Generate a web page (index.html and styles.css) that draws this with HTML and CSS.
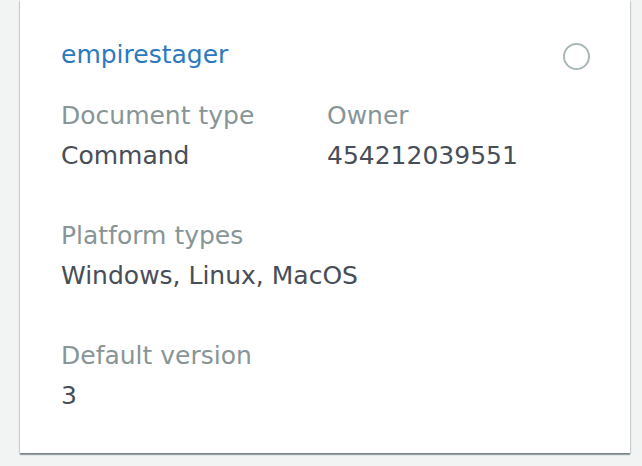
FILE: index.html
```html
<!DOCTYPE html>
<html>
<head>
<meta charset="utf-8">
<link rel="stylesheet" href="styles.css">
</head>
<body>
<div class="page">
  <div class="card">
    <div class="card-head">
      <a class="title" href="#">empirestager</a>
      <span class="radio"></span>
    </div>
    <div class="row">
      <div class="field">
        <div class="label">Document type</div>
        <div class="value">Command</div>
      </div>
      <div class="field">
        <div class="label">Owner</div>
        <div class="value">454212039551</div>
      </div>
    </div>
    <div class="field">
      <div class="label">Platform types</div>
      <div class="value">Windows, Linux, MacOS</div>
    </div>
    <div class="field">
      <div class="label">Default version</div>
      <div class="value">3</div>
    </div>
  </div>
</div>
</body>
</html>
```
FILE: styles.css
```css
html, body {
  margin: 0;
  padding: 0;
  background: #f2f3f3;
}
.page {
  padding: 0 12px 11px 20px;
}
.card {
  background: #ffffff;
  width: 610px;
  box-sizing: border-box;
  padding: 35px 40px 37px 41px;
  font-family: "DejaVu Sans", "Open Sans", sans-serif;
  font-size: 25px;
  line-height: 40px;
  box-shadow: 0 2px 1px 0 rgba(0, 28, 36, 0.35), 1px 1px 1px 0 rgba(0, 28, 36, 0.12), -1px 1px 1px 0 rgba(0, 28, 36, 0.12);
  display: flex;
  flex-direction: column;
  gap: 40px;
}
.card-head {
  display: flex;
  align-items: center;
  justify-content: space-between;
  margin-bottom: -19px;
}
.title {
  color: #2b7abf;
  text-decoration: none;
}
.radio {
  width: 23px;
  height: 23px;
  border: 2px solid #aab7b8;
  border-radius: 50%;
  margin-top: 2px;
}
.row {
  display: grid;
  grid-template-columns: 266px 1fr;
}
.label {
  color: #879596;
}
.value {
  color: #474e57;
}
```
